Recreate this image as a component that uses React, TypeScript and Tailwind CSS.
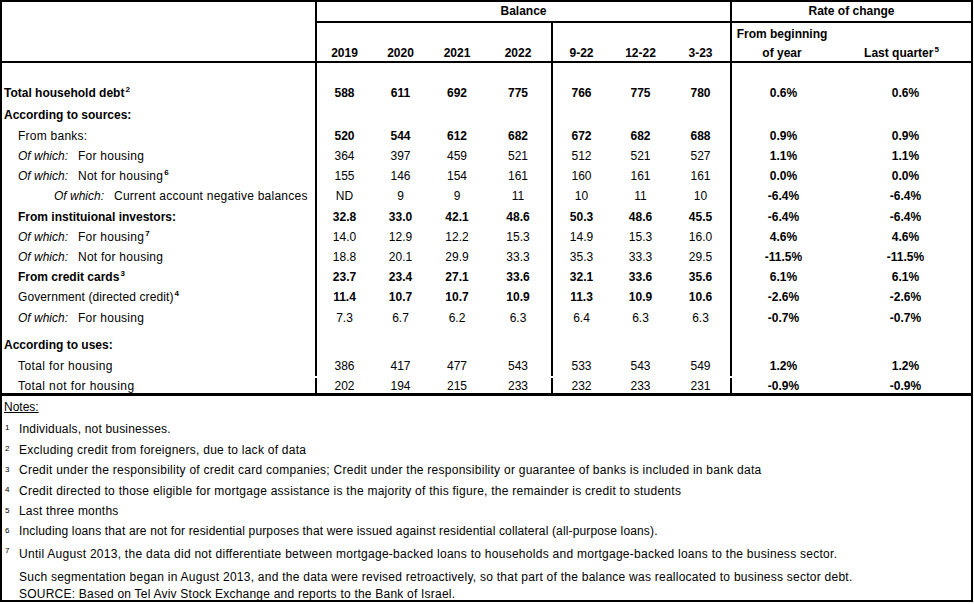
import React from "react";

type RowDef = {
  h: string;
  label?: React.ReactNode;
  vals?: string[];
  bold?: boolean;
  extra?: string;
};

const cols = [
  "w-[55px]",
  "w-[57px]",
  "w-[56px]",
  "w-[68px] border-r-2 border-black",
  "w-[57px]",
  "w-[61px]",
  "w-[61px] border-r-2 border-black",
  "w-[100px] pl-[3px] font-bold",
  "w-[139px] pl-[8px] font-bold",
];

const Sup = ({ n }: { n: string }) => (
  <span className="text-[8px] leading-[8px] relative top-[-5px] ml-[1px] font-bold">{n}</span>
);

const OfWhich = ({ children, indent = "pl-[16px]" }: { children: React.ReactNode; indent?: string }) => (
  <span className={`${indent} flex items-center`}>
    <span className="italic mr-[10px]">Of which:</span>
    <span className="tracking-[0.25px]">{children}</span>
  </span>
);

const rows: RowDef[] = [
  { h: "h-[19px]" },
  {
    h: "h-[21px]",
    label: (
      <span className="pl-[2px] font-bold">
        Total household debt<Sup n="2" />
      </span>
    ),
    vals: ["588", "611", "692", "775", "766", "775", "780", "0.6%", "0.6%"],
    bold: true,
  },
  {
    h: "h-[23px]",
    label: <span className="pl-[2px] font-bold">According to sources:</span>,
  },
  {
    h: "h-[20px]",
    label: <span className="pl-[16px] tracking-[0.25px]">From banks:</span>,
    vals: ["520", "544", "612", "682", "672", "682", "688", "0.9%", "0.9%"],
    bold: true,
  },
  {
    h: "h-[20px]",
    label: <OfWhich>For housing</OfWhich>,
    vals: ["364", "397", "459", "521", "512", "521", "527", "1.1%", "1.1%"],
  },
  {
    h: "h-[20px]",
    label: (
      <OfWhich>
        Not for housing<Sup n="6" />
      </OfWhich>
    ),
    vals: ["155", "146", "154", "161", "160", "161", "161", "0.0%", "0.0%"],
  },
  {
    h: "h-[20px]",
    label: <OfWhich indent="pl-[52px]">Current account negative balances</OfWhich>,
    vals: ["ND", "9", "9", "11", "10", "11", "10", "-6.4%", "-6.4%"],
  },
  {
    h: "h-[21px]",
    label: <span className="pl-[16px] font-bold">From instituional investors:</span>,
    vals: ["32.8", "33.0", "42.1", "48.6", "50.3", "48.6", "45.5", "-6.4%", "-6.4%"],
    bold: true,
  },
  {
    h: "h-[20px]",
    label: (
      <OfWhich>
        For housing<Sup n="7" />
      </OfWhich>
    ),
    vals: ["14.0", "12.9", "12.2", "15.3", "14.9", "15.3", "16.0", "4.6%", "4.6%"],
  },
  {
    h: "h-[20px]",
    label: <OfWhich>Not for housing</OfWhich>,
    vals: ["18.8", "20.1", "29.9", "33.3", "35.3", "33.3", "29.5", "-11.5%", "-11.5%"],
  },
  {
    h: "h-[19px]",
    label: (
      <span className="pl-[16px] font-bold">
        From credit cards<Sup n="3" />
      </span>
    ),
    vals: ["23.7", "23.4", "27.1", "33.6", "32.1", "33.6", "35.6", "6.1%", "6.1%"],
    bold: true,
  },
  {
    h: "h-[22px]",
    label: (
      <span className="pl-[16px] tracking-[0.1px]">
        Government (directed credit)<Sup n="4" />
      </span>
    ),
    vals: ["11.4", "10.7", "10.7", "10.9", "11.3", "10.9", "10.6", "-2.6%", "-2.6%"],
    bold: true,
  },
  {
    h: "h-[20px]",
    label: <OfWhich>For housing</OfWhich>,
    vals: ["7.3", "6.7", "6.2", "6.3", "6.4", "6.3", "6.3", "-0.7%", "-0.7%"],
  },
  { h: "h-[7px]" },
  {
    h: "h-[20px]",
    label: <span className="pl-[2px] font-bold">According to uses:</span>,
  },
  {
    h: "h-[21px]",
    label: <span className="pl-[16px] tracking-[0.4px]">Total for housing</span>,
    vals: ["386", "417", "477", "543", "533", "543", "549", "1.2%", "1.2%"],
  },
  {
    h: "h-[17px]",
    extra: "pt-[2px]",
    label: <span className="pl-[16px] tracking-[0.4px]">Total not for housing</span>,
    vals: ["202", "194", "215", "233", "232", "233", "231", "-0.9%", "-0.9%"],
  },
];

const notes: { h: string; n?: string; text: React.ReactNode; t: string }[] = [
  { h: "h-[21px]", n: "1", t: "tracking-[0.18px]", text: "Individuals, not businesses." },
  { h: "h-[21px]", n: "2", t: "tracking-[0.26px]", text: "Excluding credit from foreigners, due to lack of data" },
  {
    h: "h-[20px]",
    n: "3",
    t: "tracking-[0.26px]",
    text: "Credit under the responsibility of credit card companies; Credit under the responsibility or guarantee of banks is included in bank data",
  },
  {
    h: "h-[21px]",
    n: "4",
    t: "tracking-[0.26px]",
    text: "Credit directed to those eligible for mortgage assistance is the majority of this figure, the remainder is credit to students",
  },
  { h: "h-[20px]", n: "5", t: "tracking-[0.2px]", text: "Last three months" },
  {
    h: "h-[20px]",
    n: "6",
    t: "tracking-[0.15px]",
    text: "Including loans that are not for residential purposes that were issued against residential collateral (all-purpose loans).",
  },
  {
    h: "h-[26px]",
    n: "7",
    t: "tracking-[0.27px]",
    text: "Until August 2013, the data did not differentiate between mortgage-backed loans to households and mortgage-backed loans to the business sector.",
  },
  {
    h: "h-[20px]",
    t: "tracking-[0.25px]",
    text: "Such segmentation began in August 2013, and the data were revised retroactively, so that part of the balance was reallocated to business sector debt.",
  },
  {
    h: "h-[13px]",
    t: "tracking-[0.22px]",
    text: "SOURCE: Based on Tel Aviv Stock Exchange and reports to the Bank of Israel.",
  },
];

function BodyRow({ r }: { r: RowDef }) {
  return (
    <div className={`flex ${r.h} ${r.extra ?? ""}`}>
      <div className="w-[315px] border-r-2 border-black flex items-center whitespace-nowrap">
        {r.label}
      </div>
      {cols.map((c, i) => (
        <div
          key={i}
          className={`${c} flex items-center justify-center ${r.bold ? "font-bold" : ""}`}
        >
          {r.vals ? r.vals[i] : ""}
        </div>
      ))}
    </div>
  );
}

export default function App() {
  return (
    <div className="w-[974px] h-[604px] bg-white text-black text-[12px] leading-[14px] font-['Liberation_Sans',Arial,sans-serif] overflow-hidden">
      <div className="w-[973px] border-2 border-black flex flex-col">
        {/* Header */}
        <div className="flex h-[61px] border-b-2 border-black font-bold">
          <div className="w-[315px] border-r-2 border-black" />
          <div className="w-[415px] border-r-2 border-black flex flex-col">
            <div className="h-[21px] border-b-2 border-black flex items-center justify-center pb-[1px]">
              Balance
            </div>
            <div className="flex flex-1 items-end leading-[19px]">
              <div className="w-[55px] text-center mb-[-2px]">2019</div>
              <div className="w-[57px] text-center mb-[-2px]">2020</div>
              <div className="w-[56px] text-center mb-[-2px]">2021</div>
              <div className="w-[68px] h-full border-r-2 border-black flex items-end justify-center">
                <span className="mb-[-2px]">2022</span>
              </div>
              <div className="w-[57px] text-center mb-[-2px]">9-22</div>
              <div className="w-[61px] text-center mb-[-2px]">12-22</div>
              <div className="w-[59px] text-center mb-[-2px]">3-23</div>
            </div>
          </div>
          <div className="w-[239px] flex flex-col">
            <div className="h-[21px] border-b-2 border-black flex items-center justify-center pb-[1px]">
              Rate of change
            </div>
            <div className="flex flex-1 items-end leading-[19px]">
              <div className="w-[100px] text-center mb-[-2px]">
                From beginning
                <br />
                of year
              </div>
              <div className="w-[139px] text-center mb-[-2px]">
                Last quarter<Sup n="5" />
              </div>
            </div>
          </div>
        </div>
        {/* Body */}
        <div className="flex flex-col h-[333px] border-b-[3px] border-black">
          {rows.map((r, i) => (
            <BodyRow key={i} r={r} />
          ))}
        </div>
        {/* Notes */}
        <div className="flex flex-col h-[204px]">
          <div className="h-[22px] flex items-center pl-[2px]">
            <span className="underline">Notes:</span>
          </div>
          {notes.map((n, i) => (
            <div key={i} className={`${n.h} flex items-center whitespace-nowrap`}>
              <span className="w-[17px] pl-[3px] text-[8px] self-start pt-[3px]">{n.n ?? ""}</span>
              <span className={n.t}>{n.text}</span>
            </div>
          ))}
        </div>
      </div>
    </div>
  );
}
